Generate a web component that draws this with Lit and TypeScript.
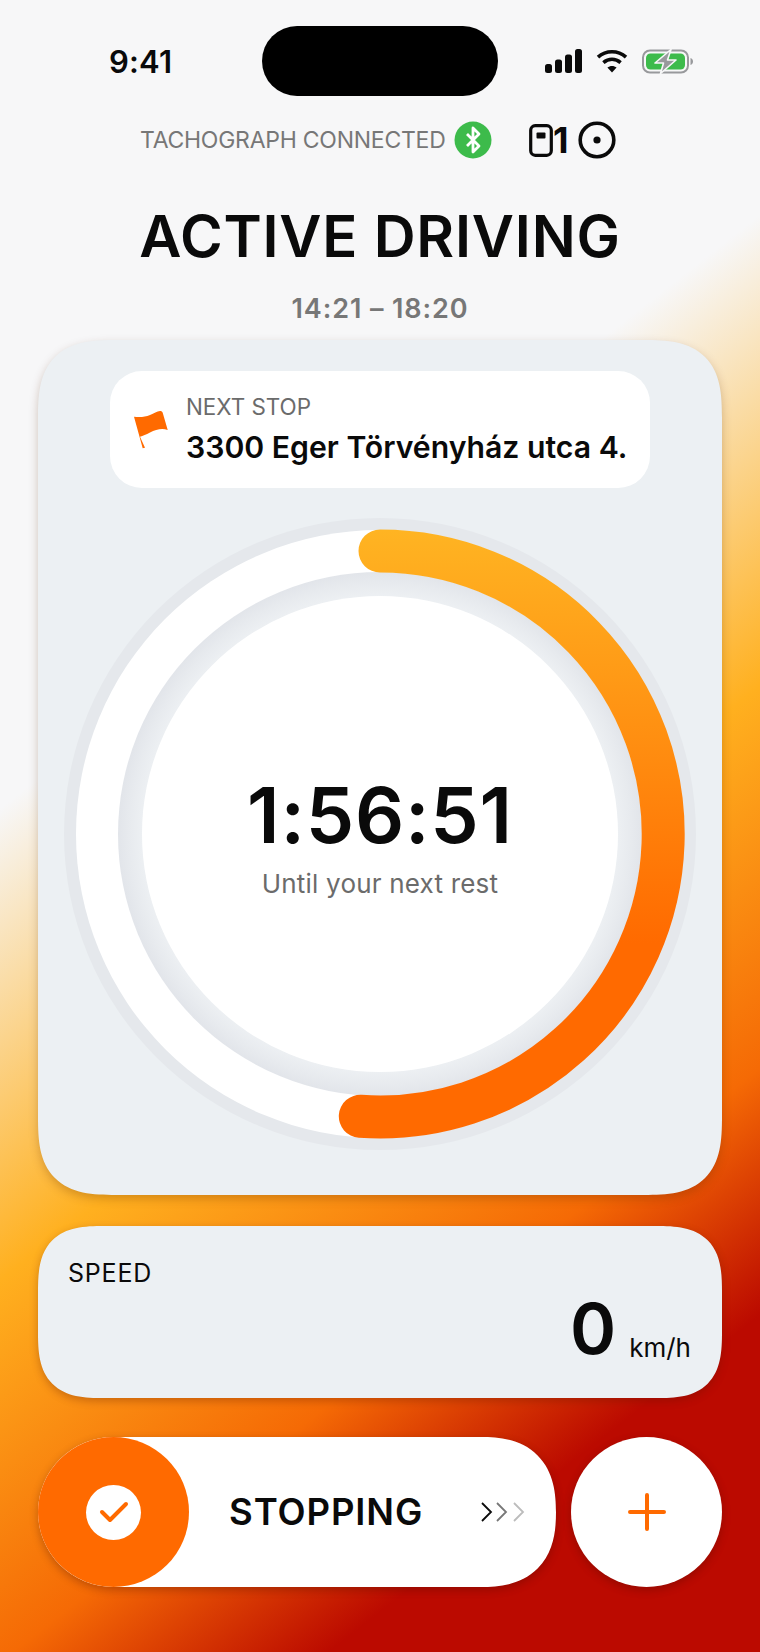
import { LitElement, html, css, svg } from 'lit';
import { customElement } from 'lit/decorators.js';

@customElement('app-root')
export class AppRoot extends LitElement {
  static styles = css`
    :host {
      display: block;
      width: 760px;
      height: 1652px;
      overflow: hidden;
      font-family: Inter, 'Liberation Sans', sans-serif;
      color: #0a0a0a;
      background: linear-gradient(142deg, #f7f7f8 0%, #f7f7f8 36%, #ffb01f 57%, #f56a05 74%, #bb0a00 85%, #bb0a00 100%);
    }
    svg { display: block; flex: none; }

    .status {
      height: 70px;
      padding: 26px 67px 0 109px;
      display: grid;
      grid-template-columns: 153px 236px 1fr;
      align-items: center;
    }
    .clock { font-size: 31px; font-weight: 600; line-height: 1; letter-spacing: 0.2px; }
    .island { height: 70px; border-radius: 36px; background: #000; }
    .sys { display: flex; align-items: center; justify-content: flex-end; gap: 14px; }

    .conn {
      height: 38px;
      margin-top: 25px;
      padding-left: 140px;
      display: flex;
      align-items: center;
    }
    .conn-label { font-size: 23px; color: #777; line-height: 1; letter-spacing: -0.25px; width: 314px; white-space: nowrap; }
    .card-no { font-size: 36px; font-weight: 700; line-height: 1; width: 25px; margin-left: 0; }
    .bt { margin-right: 37px; }

    h1 {
      margin: 47px 0 0;
      height: 60px;
      font-size: 58px;
      line-height: 60px;
      font-weight: 600;
      text-align: center;
      letter-spacing: 0.8px;
    }
    .window {
      margin-top: 28px;
      height: 30px;
      font-size: 27px;
      line-height: 30px;
      font-weight: 600;
      color: #777;
      text-align: center;
      letter-spacing: 0.9px;
    }

    .main {
      margin: 16px 38px 0;
      height: 855px;
      box-sizing: border-box;
      padding-top: 31px;
      border-radius: 78px;
      corner-shape: superellipse(1.5);
      background: #ecf0f3;
      box-shadow: 0 4px 10px rgba(90, 40, 0, 0.25);
    }
    .next {
      margin: 0 72px;
      height: 117px;
      border-radius: 32px;
      background: #fff;
      display: flex;
      align-items: center;
      gap: 18px;
      padding-left: 24px;
    }
    .next-label { font-size: 22.4px; line-height: 26px; color: #6b6b6b; margin-top: 1px; }
    .next-addr { font-size: 30.2px; line-height: 38px; font-weight: 600; white-space: nowrap; margin-top: 8px; }

    .ring {
      margin: 26px 22px 0;
      display: grid;
      width: 640px;
      height: 640px;
    }
    .ring > * { grid-area: 1 / 1; }
    .readout {
      display: flex;
      flex-direction: column;
      align-items: center;
      justify-content: center;
      padding-top: 4.5px;
    }
    .time { font-size: 77px; line-height: 84px; font-weight: 600; letter-spacing: 0.8px; }
    .until { font-size: 26px; line-height: 32px; color: #6b6b6b; margin-top: 11.5px; letter-spacing: 0.2px; }

    .speed {
      margin: 31px 38px 0;
      height: 172px;
      box-sizing: border-box;
      padding: 32px 31px 0 30px;
      border-radius: 66px;
      corner-shape: superellipse(1.5);
      background: #ecf0f3;
      box-shadow: 0 3px 8px rgba(90, 20, 0, 0.3);
    }
    .speed-label { font-size: 25px; line-height: 30px; letter-spacing: 0.8px; }
    .speed-value { display: flex; justify-content: flex-end; align-items: flex-end; gap: 13px; margin-top: -1px; }
    .speed-num { font-size: 70px; line-height: 84px; font-weight: 600; }
    .speed-unit { font-size: 26px; line-height: 30px; margin-bottom: 8px; }

    .actions {
      margin: 39px 38px 0;
      display: flex;
      gap: 15px;
    }
    .slider {
      flex: 1;
      height: 150px;
      border-radius: 75px;
      corner-shape: round superellipse(1.3) superellipse(1.3) round;
      background: #fff;
      display: flex;
      align-items: center;
      box-shadow: 0 3px 8px rgba(60, 10, 0, 0.3);
    }
    .handle {
      width: 151px;
      height: 150px;
      border-radius: 50%;
      background: #ff6a00;
      display: flex;
      align-items: center;
      justify-content: center;
    }
    .handle-dot {
      width: 55px;
      height: 55px;
      border-radius: 50%;
      background: #fff;
      display: flex;
      align-items: center;
      justify-content: center;
    }
    .slider-label { font-size: 36.5px; font-weight: 600; margin-left: 40px; width: 252px; white-space: nowrap; letter-spacing: 0.9px; }
    .add {
      width: 151px;
      height: 150px;
      border-radius: 50%;
      background: #fff;
      display: flex;
      align-items: center;
      justify-content: center;
      box-shadow: 0 3px 8px rgba(60, 10, 0, 0.3);
    }
  `;

  private ringArt() {
    return html`<svg width="640" height="640" viewBox="0 0 640 640">
      <defs>
        <linearGradient id="arc" gradientUnits="userSpaceOnUse" x1="0" y1="16" x2="0" y2="624">
          <stop offset="0" stop-color="#ffb422"></stop>
          <stop offset="0.68" stop-color="#ff6a00"></stop>
          <stop offset="1" stop-color="#ff6a00"></stop>
        </linearGradient>
        <radialGradient id="groove" gradientUnits="userSpaceOnUse" cx="320" cy="320" r="262">
          <stop offset="0.905" stop-color="#edf0f3"></stop>
          <stop offset="0.96" stop-color="#e7eaee"></stop>
          <stop offset="1" stop-color="#e2e5ea"></stop>
        </radialGradient>
      </defs>
      ${svg`
        <circle cx="320" cy="320" r="316" fill="#e5e8ec"></circle>
        <circle cx="320" cy="320" r="304" fill="#fff"></circle>
        <circle cx="320" cy="320" r="262" fill="url(#groove)"></circle>
        <circle cx="320" cy="320" r="238" fill="#fff"></circle>
        <path d="M320 37 A283 283 0 1 1 300.3 602.3" fill="none" stroke="url(#arc)" stroke-width="43" stroke-linecap="round"></path>
      `}
    </svg>`;
  }

  render() {
    return html`
      <div class="status">
        <div class="clock">9:41</div>
        <div class="island"></div>
        <div class="sys">
          <svg width="37" height="24" viewBox="0 0 37 24" fill="#0a0a0a">
            <rect x="0" y="15" width="7" height="9" rx="2.5"></rect>
            <rect x="10" y="10.5" width="7" height="13.5" rx="2.5"></rect>
            <rect x="20" y="5.5" width="7" height="18.5" rx="2.5"></rect>
            <rect x="30" y="0" width="7" height="24" rx="2.5"></rect>
          </svg>
          <svg width="32" height="24" viewBox="0 0 32 24" fill="none" stroke="#0a0a0a" stroke-width="3.6">
            <path d="M2 8.2 C10 1 22 1 30 8.2"></path>
            <path d="M7.4 13.6 C12.6 9.2 19.4 9.2 24.6 13.6"></path>
            <path d="M16 23.4 L11.4 18.6 C14 16.4 18 16.4 20.6 18.6 Z" fill="#0a0a0a" stroke="none"></path>
          </svg>
          <svg width="51" height="25" viewBox="0 0 51 25">
            <rect x="1" y="1.5" width="45" height="22" rx="7" fill="none" stroke="#98999c" stroke-width="2"></rect>
            <rect x="4" y="4.5" width="39" height="16" rx="4.5" fill="#3dbb4b"></rect>
            <path d="M48.5 9 C50 9.6 51 10.8 51 12.5 C51 14.2 50 15.4 48.5 16 Z" fill="#98999c"></path>
            <path d="M29 .5 L13 14 H21.5 L18.5 24.5 L34 11 H25.5 Z" fill="#98999c" stroke="#f7f7f8" stroke-width="1.6" stroke-linejoin="round"></path>
          </svg>
        </div>
      </div>

      <div class="conn">
        <div class="conn-label">TACHOGRAPH CONNECTED</div>
        <svg class="bt" width="38" height="38" viewBox="0 0 38 38">
          <circle cx="19" cy="19" r="18.5" fill="#3dbb4b"></circle>
          <path d="M13 13 L25 25 L19 31 V7 L25 13 L13 25" fill="none" stroke="#fff" stroke-width="2.8" stroke-linejoin="round"></path>
        </svg>
        <svg width="24" height="33" viewBox="0 0 24 33">
          <rect x="1.7" y="1.7" width="20.6" height="29.6" rx="4.5" fill="none" stroke="#0a0a0a" stroke-width="3.2"></rect>
          <rect x="7.5" y="8.5" width="9" height="6" rx="1" fill="#0a0a0a"></rect>
        </svg>
        <div class="card-no">1</div>
        <svg width="38" height="38" viewBox="0 0 38 38">
          <circle cx="19" cy="19" r="16.8" fill="none" stroke="#0a0a0a" stroke-width="3.6"></circle>
          <circle cx="19" cy="19" r="3.6" fill="#0a0a0a"></circle>
        </svg>
      </div>

      <h1>ACTIVE DRIVING</h1>
      <div class="window">14:21 – 18:20</div>

      <section class="main">
        <div class="next">
          <svg width="34" height="38" viewBox="0 0 34 38" fill="#ff6a00">
            <path d="M0 5.7 C6 6.5 11 6 16 4 C20 2.4 23 0 26 0 C27.5 0 28.3 .6 28.7 1.7 L33.7 19 C28 17 22 18.5 16 21.5 C12 23.5 9 25 6 25.7 L11 36.7 L8.7 37.3 Z"></path>
          </svg>
          <div>
            <div class="next-label">NEXT STOP</div>
            <div class="next-addr">3300 Eger Törvényház utca 4.</div>
          </div>
        </div>
        <div class="ring">
          ${this.ringArt()}
          <div class="readout">
            <div class="time">1:56:51</div>
            <div class="until">Until your next rest</div>
          </div>
        </div>
      </section>

      <section class="speed">
        <div class="speed-label">SPEED</div>
        <div class="speed-value">
          <span class="speed-num">0</span>
          <span class="speed-unit">km/h</span>
        </div>
      </section>

      <div class="actions">
        <div class="slider">
          <div class="handle">
            <div class="handle-dot">
              <svg width="30" height="22" viewBox="0 0 30 22" fill="none" stroke="#ff6a00" stroke-width="4" stroke-linecap="round" stroke-linejoin="round">
                <path d="M3 11 L11 19 L27 3"></path>
              </svg>
            </div>
          </div>
          <div class="slider-label">STOPPING</div>
          <svg width="45" height="20" viewBox="0 0 45 20" fill="none" stroke-width="1.8">
            <path d="M1 1 L10 10 L1 19" stroke="#0a0a0a"></path>
            <path d="M16 1 L25 10 L16 19" stroke="#777"></path>
            <path d="M33 1 L42 10 L33 19" stroke="#bcbcbc"></path>
          </svg>
        </div>
        <div class="add">
          <svg width="38" height="38" viewBox="0 0 38 38" stroke="#ff6a00" stroke-width="4" stroke-linecap="round">
            <path d="M19 2 V36 M2 19 H36"></path>
          </svg>
        </div>
      </div>
    `;
  }
}
